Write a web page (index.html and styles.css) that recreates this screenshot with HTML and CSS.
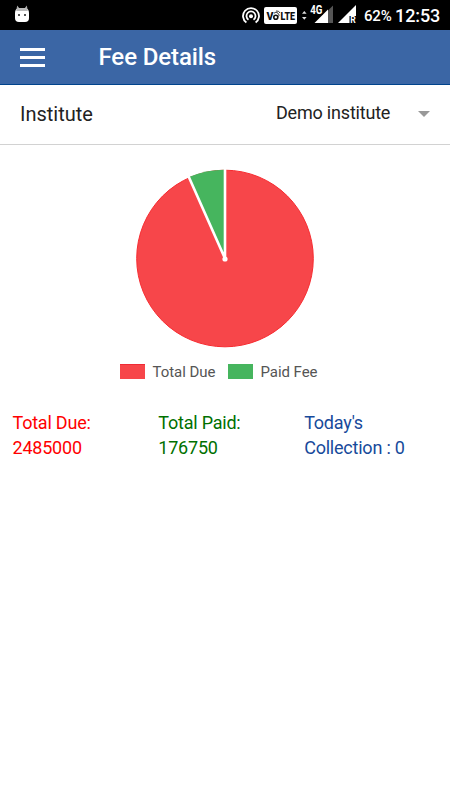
FILE: index.html
```html
<!DOCTYPE html>
<html lang="en">
<head>
<meta charset="utf-8">
<title>Fee Details</title>
<link rel="stylesheet" href="styles.css">
</head>
<body>
<div class="status">
  <svg class="cat" width="16" height="18" viewBox="0 0 16 18">
    <path d="M2.5 4 3.2 0.5 5.5 3.5ZM10.5 3.5 12.8 0.5 13.5 4Z" fill="#aaa"/>
    <path d="M1 8Q1 3.5 5 3.2H11Q15 3.5 15 8V13Q15 17 11 17H5Q1 17 1 13Z" fill="#fff"/>
    <path d="M2.3 5Q3.2 3.2 5 3.2H11Q12.8 3.2 13.7 5V6H2.3Z" fill="#b9b9b9"/>
    <path d="M4 9h2v2H4zM10 9h2v2h-2z" fill="#555"/>
  </svg>
  <svg class="hotspot" width="18" height="18" viewBox="0 0 18 18" fill="none" stroke="#fff" stroke-width="1.8">
    <path d="M4.4 15.6A8 8 0 1 1 13.6 15.6M6.5 12.7A4.5 4.5 0 1 1 11.5 12.7"/>
    <circle cx="9" cy="9.3" r="2" fill="#fff" stroke="none"/>
  </svg>
  <svg class="volte" width="33" height="17" viewBox="0 0 33 17">
    <rect width="33" height="17" rx="2" fill="#fff"/>
    <text x="2.5" y="12.6" textLength="7" lengthAdjust="spacingAndGlyphs">V</text>
    <circle cx="11.8" cy="10.2" r="2" fill="none" stroke="#111" stroke-width="1.6"/>
    <text x="16.5" y="12.6" textLength="14.5" lengthAdjust="spacingAndGlyphs">LTE</text>
    <path d="M10 6.2Q12 4 14 6.2T14.5 9.5M12 4Q15 3.5 16 6" fill="none" stroke="#222" stroke-width="0.9"/>
  </svg>
  <svg class="signals" width="56" height="22" viewBox="0 0 56 22">
    <path d="M0 9.8 2.3 7 4.6 9.8ZM0 13H4.6L2.3 15.8Z" fill="#ddd"/>
    <path d="M31 19V1.5L26 6.5V19Z" fill="#555"/>
    <path d="M12.5 19 26 5.5V19Z" fill="#fff"/>
    <path d="M7 0H20.6V10.8H7Z" fill="#000"/>
    <text class="network" x="8.3" y="9.8" textLength="12.2" lengthAdjust="spacingAndGlyphs">4G</text>
    <path d="M36 19 54 1V12H47.5V19Z" fill="#fff"/>
    <text class="roaming" x="48.3" y="19">R</text>
  </svg>
  <span class="battery">62%</span>
  <span class="clock">12:53</span>
</div>
<header class="appbar">
  <div class="menu"><i></i><i></i><i></i></div>
  <h1>Fee Details</h1>
</header>
<div class="field">
  <label>Institute</label>
  <span class="value">Demo institute</span>
  <i class="caret"></i>
</div>
<svg class="pie" width="180" height="180" viewBox="0 0 180 180">
  <circle cx="90" cy="89.5" r="88.3" fill="#f7464a" stroke="#f72b30" stroke-width="1"/>
  <path d="M90 89.5 53.9 8.1A88.8 88.8 0 0 1 90 0.7Z" fill="#46b55e"/>
  <path d="M90 0V89.5L53.5 7.2" fill="none" stroke="#fff" stroke-width="2.6" stroke-linejoin="round"/>
  <circle cx="90" cy="90" r="2.6" fill="#fff"/>
</svg>
<div class="legend">
  <i class="swatch due"></i><span class="due-label">Total Due</span>
  <i class="swatch paid"></i><span class="paid-label">Paid Fee</span>
</div>
<div class="totals">
  <div class="total-due">Total Due:<br>2485000</div>
  <div class="total-paid">Total Paid:<br>176750</div>
  <div class="today">Today's<br>Collection : 0</div>
</div>
</body>
</html>
```
FILE: styles.css
```css
* { box-sizing: border-box; }
body { margin: 0; width: 450px; height: 800px; overflow: hidden; background: #fff; font-family: Roboto, sans-serif; }
.status { height: 30px; background: #000; color: #fff; display: flex; align-items: flex-start; white-space: nowrap; }
.status svg { flex: none; display: block; }
.cat { margin: 5px 0 0 14px; }
.hotspot { margin: 7px 0 0 212px; }
.volte { margin: 7px 0 0 4px; }
.volte text { font: 900 10.5px Roboto, sans-serif; fill: #111; }
.signals { margin: 4px 0 0 5px; }
.network { font: 700 12px Roboto, sans-serif; fill: #fff; }
.roaming { font: 700 8.5px Roboto, sans-serif; fill: #fff; }
.battery { margin-left: 6px; width: 31px; font-size: 15px; font-weight: 500; letter-spacing: -0.2px; line-height: 32px; }
.clock { font-size: 18px; font-weight: 500; letter-spacing: -0.1px; line-height: 32px; }
.appbar { height: 55px; background: #3b66a5; border-bottom: 1px solid #00438c; display: flex; align-items: flex-start; color: #fff; }
.menu { width: 25px; margin: 18px 0 0 20px; display: flex; flex-direction: column; gap: 4.8px; }
.menu i { height: 3px; background: #fff; }
h1 { margin: 12px 0 0 53.5px; font-size: 24px; line-height: 30px; font-weight: 500; letter-spacing: -0.1px; }
.field { height: 60px; border-bottom: 1px solid #d2d2d2; display: flex; align-items: flex-start; color: #222; }
label { width: 256px; margin-left: 20px; font-size: 20px; line-height: 59px; }
.value { width: 142px; font-size: 18px; line-height: 56px; letter-spacing: -0.2px; }
.caret { margin-top: 26px; border: 6.5px solid transparent; border-top-color: #999; border-bottom: 0; }
.pie { display: block; margin: 24px auto 0; }
.legend { display: flex; align-items: center; height: 20px; margin: 13px 0 0 120px; font-size: 15px; letter-spacing: -0.05px; color: #555; white-space: nowrap; }
.swatch { width: 25px; height: 15px; margin-right: 7.5px; margin-top: -2px; }
.due { background: #f7464a; border-top: 1px solid #ef2b35; }
.paid { background: #46b55e; }
.due-label { width: 75.5px; }
.totals { display: flex; padding: 28px 0 0 12.5px; font-size: 18px; letter-spacing: -0.22px; line-height: 25px; }
.totals div { width: 146px; white-space: nowrap; }
.total-due { color: #f00; }
.total-paid { color: #007000; }
.today { color: #174a9b; }
```
